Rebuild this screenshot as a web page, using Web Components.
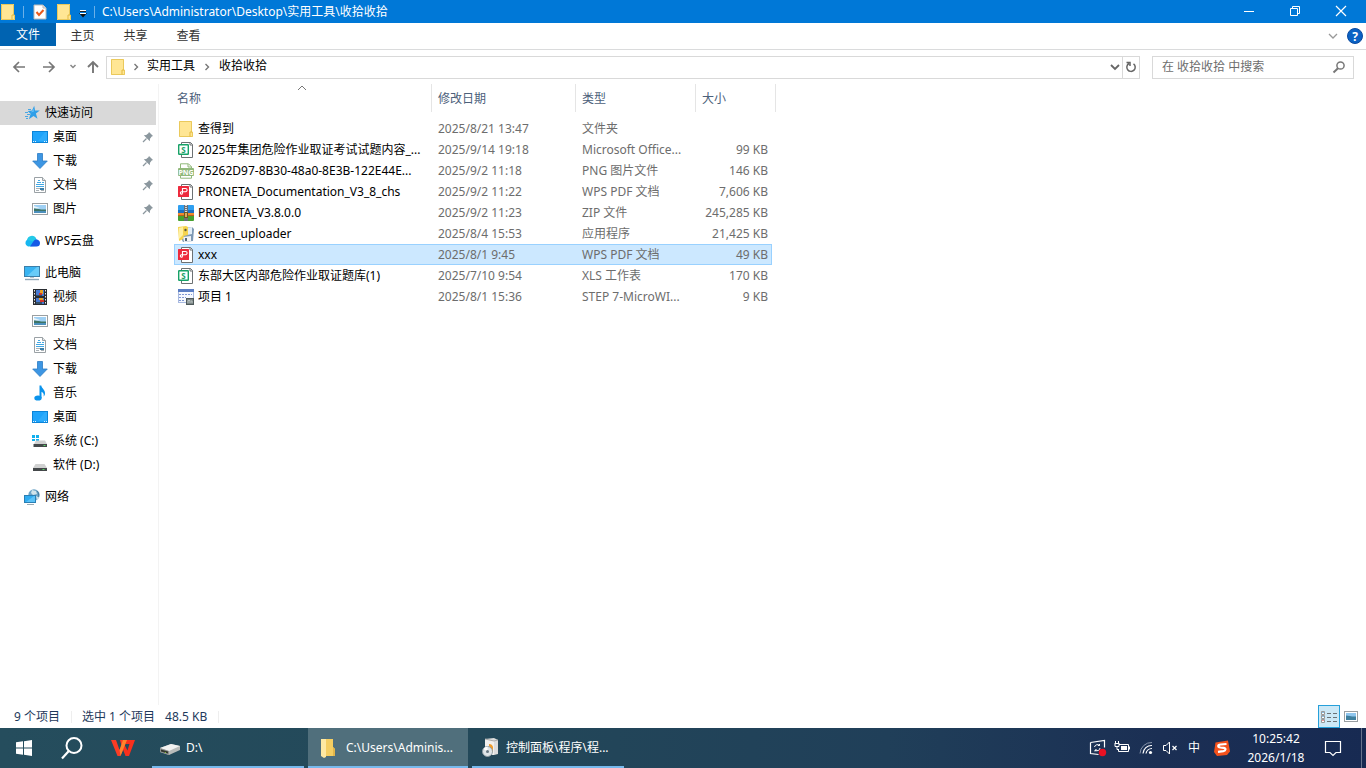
<!DOCTYPE html>
<html lang="zh-CN">
<head>
<meta charset="utf-8">
<title>收拾收拾</title>
<style>
html, body { height: 100%; margin: 0; }
body { font: 12px/16px "Noto Sans", "Noto Sans CJK SC", sans-serif; color: #000; background: #fff; overflow: hidden; }
</style>
</head>
<body>
<desktop-screen>
  <explorer-window slot="window"></explorer-window>
  <task-bar slot="taskbar">
    <task-button icon="driveBig">D:\</task-button>
    <task-button icon="folderTask" active>C:\Users\Adminis...</task-button>
    <task-button icon="programs">控制面板\程序\程...</task-button>
  </task-bar>
</desktop-screen>
<script>
const ICONS = {
  folder: [16, 16, `<path d="M1 0h13v11h1v5H1z" fill="#ffe694"/><path d="M1.500 .5h12v10.500h1V15.500h-13z" fill="none" stroke="#eac95c"/><path d="M12 15.500v-4.500h2" fill="none" stroke="#e3b93f"/>`],
  folderTask: [16, 20, `<path d="M4 1h9v8l2 2v7H4z" fill="#f5ce62"/><path d="M1 1h5v18l-2 1-3-2z" fill="#ffe9a2"/><path d="M13 9l2 2v7h-2z" fill="#e2b64a"/>`],
  props: [14, 16, `<path d="M1 1h9l3 3v11H1z" fill="#fff" stroke="#b9b9b9"/><path d="M10 1v3h3" fill="#ddd" stroke="#b9b9b9"/><path d="M3.500 8l2.500 3 4.500-5" fill="none" stroke="#ea5a1c" stroke-width="2"/>`],
  qaMenu: [8, 8, `<path d="M1 .5h6" stroke="#fff"/><path d="M1 1.500h6" stroke="#222"/><path d="M0 3h8L4 7.500z" fill="#111"/><path d="M1 3.500h6" stroke="#fff"/>`],
  min: [12, 12, `<path d="M1 6.500h10" stroke="#fff"/>`],
  restore: [12, 12, `<path d="M1.500 3.500h7v7h-7zM3.500 3V1.500h7v7H9" fill="none" stroke="#fff"/>`],
  close: [12, 12, `<path d="M1 1l10 10M11 1L1 11" stroke="#fff" stroke-width="1.200"/>`],
  chevDown: [10, 8, `<path d="M1 2l4 4 4-4" fill="none" stroke="currentColor" stroke-width="var(--w,1.300)"/>`],
  chevSmall: [8, 8, `<path d="M1.500 2L4 4.500 6.500 2" fill="none" stroke="#888" stroke-width="1.500"/>`],
  chevRight: [8, 8, `<path d="M2.500 1L5.500 4l-3 3" fill="none" stroke="#777" stroke-width="1.400"/>`],
  chevUp: [10, 6, `<path d="M1 5l4-4 4 4" fill="none" stroke="#777"/>`],
  help: [16, 16, `<circle cx="8" cy="8" r="7.500" fill="#0b62c4" stroke="#0a4aa0"/><text x="8" y="12.500" text-anchor="middle" font-family="Noto Sans" font-weight="700" font-size="12" fill="#fff">?</text>`],
  back: [14, 14, `<path d="M13 7H2M7 2L2 7l5 5" fill="none" stroke="#777" stroke-width="1.700"/>`],
  forward: [14, 14, `<path d="M1 7h11M7 2l5 5-5 5" fill="none" stroke="#777" stroke-width="1.700"/>`],
  up: [14, 14, `<path d="M7 13V2M2 7l5-5 5 5" fill="none" stroke="#777" stroke-width="1.900"/>`],
  refresh: [12, 12, `<path d="M8.500 2.800a4.200 4.200 0 1 1-4.500-.3M1.500 1.500h3.500V5" fill="none" stroke="#666" stroke-width="1.500"/>`],
  search: [14, 14, `<circle cx="8.500" cy="5.500" r="3.600" fill="none" stroke="#777" stroke-width="1.500"/><path d="M6 8.200L1.500 12.500" stroke="#777" stroke-width="2"/>`],
  quick: [16, 16, `<path d="M10.200 .8l.9 4.700 4.700.1-3.900 3 1.600 5.200-4-2.700-4.600 3.200 1.700-5.500-3-2.700 4.400-.6z" fill="#2f9fe8"/><path d="M9.500 3.500l.5 3-3 1z" fill="#62bdf5"/><path d="M4 4.500h3M1 7.500h3M3 9.500h3M1 11.500h3M2 13.500h2" stroke="#4aa6e2"/>`],
  desktop: [16, 12, `<rect width="16" height="12" fill="#0b84d8"/><rect x="1" y="1" width="14" height="10" fill="#1fa4fb"/><path d="M6 10L13 1h2v9z" fill="#2eacfc"/><path d="M1 10.500h1M3 10.500h1M12 10.500h1M14 10.500h1" stroke="#dff1ff"/>`],
  download: [16, 16, `<path d="M5.500 .5h5V8h4.800L8 15.500.700 8h4.800z" fill="#3d96e3" stroke="#2c7cc4" stroke-width=".8"/>`],
  docs: [14, 16, `<path d="M1.500 .5h8l3 3v12h-11z" fill="#fff" stroke="#9aa1a5"/><path d="M9.500 .5v3h3" fill="#e4e8ea" stroke="#9aa1a5"/><path d="M5 3.500h2M4 5.500h4M9 5.500h2M3 7.500h8M3 9.500h8" stroke="#43a8e4"/><path d="M3 11.500h4M3 13.500h3" stroke="#aab1b5"/><path d="M7 11h4v2H7z" fill="#3c7fa9"/><path d="M8 13.500h3" stroke="#aab1b5"/>`],
  pictures: [16, 12, `<rect x=".5" y=".5" width="15" height="11" fill="#fff" stroke="#9a9fa2"/><rect x="2" y="2" width="12" height="8" fill="#9fd0f4"/><path d="M2 3l6 2-6 1z" fill="#e9f5fb"/><path d="M2 5.500c4 .5 7 2 12 2V10H2z" fill="#4c90bd"/><path d="M2 5.500c4 .2 7 1.500 12 1v1.500H2z" fill="#3e7466"/>`],
  pin: [12, 12, `<path d="M7 1l4 4-1.300.6-1.700 2.200-.2 2.400L1.800 4.200l2.400-.2 2.200-1.700z" fill="#8b979e"/><path d="M4.500 7.500L1 11" stroke="#8b979e" stroke-width="1.200"/>`],
  cloud: [16, 14, `<path d="M4 12.500a3.800 3.800 0 0 1-.5-7A5 5 0 0 1 12.500 5l1 7z" fill="#16b7f1"/><path d="M3 5.800A5 5 0 0 1 12 4l-1 4z" fill="#24c9e8"/><path d="M6 12.500L10 6.500a3.500 3.500 0 0 1 6 2.500 3.500 3.500 0 0 1-3.500 3.500z" fill="#1659e6"/>`],
  pc: [16, 16, `<rect x=".5" y="1.500" width="15" height="10" fill="#39b4f2" stroke="#3c7fa9"/><path d="M3 11L13 2h2v9z" fill="#68cbf8"/><path d="M6 12h4v1H6z" fill="#b9c5cd"/><path d="M1 14.500h14" stroke="#8fa7b7" stroke-width="1.400"/>`],
  video: [14, 16, `<rect width="14" height="16" fill="#292c31"/><path d="M1.500 1v14M12.500 1v14" stroke="#e8e8e8" stroke-dasharray="1.500 1.500"/><rect x="3" y="1" width="8" height="6" fill="#4779d2"/><rect x="3" y="9" width="8" height="6" fill="#4779d2"/><path d="M7 1h3v4H7zM6 9h4v2H6z" fill="#e8a322"/><path d="M6 4h3v2H6zM7 11h4v2H7z" fill="#d2352c"/><path d="M3 6h6v1H3zM3 13h6v2H3z" fill="#34506b"/>`],
  music: [14, 16, `<ellipse cx="5" cy="13" rx="3.700" ry="2.600" fill="#0a93ec"/><path d="M6.500 .5h1.800c.2 3 4.200 4.200 3.700 8.500-.2 1.200-.8 2-1.400 2.500.6-2.500-.4-4-2.100-4.800V13h-2z" fill="#0a93ec"/>`],
  driveC: [16, 16, `<path d="M0 2h3v3H0zM4 2h3v3H4zM0 6h3v2H0zM4 6h3v2H4z" fill="#12b0ee"/><path d="M4 7.500h9l2 3.500H2z" fill="#d0d1d1"/><path d="M1.500 11h13.500v3H1.500z" fill="#44484a"/><path d="M11.500 12h2v1h-2z" fill="#58d866"/>`],
  drive: [16, 16, `<path d="M3.500 7h9l2.500 4H1z" fill="#d0d1d1"/><path d="M1 11h14v3H1z" fill="#44484a"/><path d="M10.500 12h2v1h-2z" fill="#58d866"/>`],
  network: [16, 16, `<circle cx="10" cy="6" r="5.700" fill="#6ba3c6"/><path d="M8 1l4 1 1 3-4 1-2-2zM12 7l3 1-2 3z" fill="#d1e4ea"/><path d="M13 2c2 2 2 4 1 6" stroke="#447c9c" fill="none"/><rect x=".5" y="6.500" width="11" height="7" fill="#2fabf0" stroke="#2a7fb4"/><path d="M2 13l8-6h1v6z" fill="#5cc2f7"/><path d="M3 15.500h7" stroke="#9aaab3"/>`],
  et: [16, 16, `<path d="M3.500 .5h9l2 2v13h-11z" fill="#fff" stroke="#6c7173"/><path d="M12 .5v2.500h2.500" fill="none" stroke="#6c7173"/><rect y="2" width="11" height="11" fill="#fff"/><rect x=".7" y="2.700" width="9.600" height="9.600" rx=".5" fill="#fff" stroke="#17a267" stroke-width="1.400"/><text x="5.500" y="10.500" text-anchor="middle" font-family="Noto Sans" font-weight="700" font-size="8" fill="#17a267">S</text>`],
  pdf: [16, 16, `<path d="M3.500 .5h9l2 2v13h-11z" fill="#fff" stroke="#6c7173"/><path d="M12 .5v2.500h2.500" fill="none" stroke="#6c7173"/><rect y="2" width="11" height="11" rx=".5" fill="#ed2a3d"/><path d="M4.500 9.500v-5h3a1.500 1.500 0 0 1 0 3.200H3.500a1.200 1.200 0 1 0 1 2" fill="none" stroke="#fff" stroke-width="1.100"/>`],
  png: [16, 16, `<path d="M2.500 6V.800h8l3 3V6M2.500 12v3.200h11V12" fill="none" stroke="#91b97b"/><path d="M10 1v3h3.500" fill="none" stroke="#91b97b"/><rect y="5" width="16" height="8" rx="1" fill="#91b97b"/><text x="8" y="11.500" text-anchor="middle" font-family="Noto Sans" font-weight="700" font-size="7" fill="#fff">PNG</text>`],
  zip: [16, 16, `<rect width="16" height="7" rx="1" fill="#2f9ff0"/><rect y="5" width="16" height="3" fill="#1b6fc0"/><rect y="8" width="16" height="3" fill="#f08a2c"/><rect y="10" width="16" height="6" rx="1" fill="#46a12f"/><rect y="10" width="16" height="1" fill="#b6601c"/><rect x="6" width="4" height="16" fill="#6a7076"/><path d="M8 0v8" stroke="#d8dadc" stroke-dasharray="1 1" stroke-width="2"/><rect x="6.500" y="7.500" width="3" height="5" fill="#d8b062" stroke="#70541d"/>`],
  exe: [16, 16, `<path d="M5 2l9-1 2 2-1 12-10 1-2-4z" fill="#7e99b4"/><path d="M8 2l6-1v7l-5 1z" fill="#e3eef6"/><path d="M5 11l8-1v5l-7 1z" fill="#f1f3f4"/><path d="M0 1l8-1 2 1v8l-4 1-1 3-4 2z" fill="#f5d44e"/><path d="M1 2l4-1v8l-4 4z" fill="#fff0a0"/><circle cx="7.500" cy="4" r="1.200" fill="#5d5a3a"/><path d="M7 12h2v3H7z" fill="#54687a"/>`],
  step: [16, 16, `<rect x=".5" y=".5" width="15" height="13" fill="#f6f9ff" stroke="#a9bae0"/><rect width="16" height="3" fill="#5b7ec4"/><path d="M1 5.500h13M1 8.500h7M1 11.500h5" stroke="#8098d4" stroke-dasharray="2 1"/><rect x="8.500" y="9.500" width="7" height="6" fill="#7c8686" stroke="#4f5a5b"/><path d="M10 14v-2.500h2V14M13 12h1v2" stroke="#b9c2c1" fill="none"/>`],
  viewDetails: [16, 14, `<path d="M.500 1.500h3v3h-3zM.500 5.500h3v3h-3zM.500 9.500h3v3h-3z" fill="#fff" stroke="#999"/><path d="M2 2v1M2 6v1" stroke="#187cc4"/><path d="M2 10v1" stroke="#d33"/><path d="M6 3.500h4M12 3.500h4M6 7.500h4M12 7.500h4M6 11.500h4M12 11.500h4" stroke="#6b7276"/>`],
  viewBig: [14, 11, `<rect x=".5" y=".5" width="13" height="10" fill="#fff" stroke="#9a9fa2"/><rect x="2" y="2" width="10" height="7" fill="#8fc6ee"/><path d="M2 4.500c3 0 6 1.500 10 1V9H2z" fill="#3e7f9e"/>`],
  windows: [16, 16, `<path d="M0 2.300L7 1.300V7.500H0zM8 1.200L16 0v7.500H8zM0 8.500h7v6.200l-7-1zM8 8.500h8V16l-8-1.200z" fill="#fff"/>`],
  searchBig: [24, 24, `<circle cx="14" cy="9.500" r="7.500" fill="none" stroke="#fff" stroke-width="2"/><path d="M8.800 15L2 22.500" stroke="#fff" stroke-width="2.200"/>`],
  wps: [24, 18, `<path d="M0 1h5l3.500 10 2-4.500L9 1h7l-6.500 16h-3z" fill="#fb3c25"/><path d="M12 1h12l-6 16h-3.500L11 8l1.500-4 4 7.500L18.500 5h-4z" fill="#f9301d"/><path d="M12 1h4l-6.500 16-1-6z" fill="#ff842b"/>`],
  driveBig: [22, 14, `<path d="M1 7l11-4 9 2v4l-11 5-9-3z" fill="#b9bcba"/><path d="M1 7l11-4 9 2-11 5z" fill="#f2f2f1"/><path d="M1 7l9 3v4l-9-3z" fill="#8f9290"/><path d="M2 8.500l7 2v2l-7-2z" fill="#34382f"/><path d="M6 11h1v1H6z" fill="#7fbc35"/>`],
  programs: [18, 20, `<path d="M4 1l9-1 4 2v14l-4 1-9-1z" fill="#ddd"/><path d="M4 1l9 2v14l-9-2z" fill="#f1f0ee"/><path d="M4 1l9 2 4-1" fill="none" stroke="#aaa"/><path d="M8 6a4 4 0 0 1 4 3v5H8z" fill="#ee9c2d"/><circle cx="6.500" cy="13.500" r="5" fill="#dfe5e8" stroke="#909ea5"/><path d="M6.500 13.500l-4-2.500a5 5 0 0 1 4-2.500z" fill="#fff"/><circle cx="6.500" cy="13.500" r="1.500" fill="#687882"/>`],
  sync: [18, 18, `<path d="M1.500 3.500l14-2v7M1.500 3.500v11l8 1" fill="none" stroke="#fff" stroke-width="1.200"/><path d="M5.500 8a3 3 0 0 1 5-1.500V5M10.500 6.500H9M11 9a3 3 0 0 1-5 2V12.500M6 11h2" fill="none" stroke="#fff"/><circle cx="13.500" cy="13.500" r="3.700" fill="#e81123"/>`],
  battery: [16, 14, `<path d="M5 3.500h9.500v7H4.500V8M15.500 5.500v3" fill="none" stroke="#fff"/><path d="M7 5h6v4H7z" fill="#fff"/><path d="M1.500 0v2M4.500 0v2M.5 2.500h5M1 3v2.500h4V3M3 5.500v3h1.500" fill="none" stroke="#fff"/>`],
  wifi: [14, 14, `<path d="M1 12.500A11.500 11.500 0 0 1 13 1.500" fill="none" stroke="#8a97ac"/><path d="M4 12.500A8.500 8.500 0 0 1 13 4.500M7 12.500a6 6 0 0 1 6-5" fill="none" stroke="#fff" stroke-width="1.200"/><circle cx="11.500" cy="11.500" r="1.600" fill="#fff"/>`],
  mute: [16, 14, `<path d="M1.500 4.500H4L7.500 1v12L4 9.500H1.500z" fill="none" stroke="#fff"/><path d="M10.500 5l4 4M14.500 5l-4 4" stroke="#fff" stroke-width="1.200"/>`],
  sogou: [16, 16, `<path d="M1.500 2.500L14 .5l2 11-3 3.500-10 1-3-4z" fill="#f4511b"/><path d="M12.500 4L6.500 4.500c-3 .3-3 2.500 0 3l3 .3c2.800.4 2.500 3-.2 3.400l-5.300.6" fill="none" stroke="#fff" stroke-width="2.200"/>`],
  notify: [18, 18, `<path d="M1.500 2.500h15v11H12L9 16.500l-3-3H1.500z" fill="none" stroke="#fff" stroke-width="1.200"/>`]
};

class Base extends HTMLElement {
  connectedCallback() {
    if (this.shadowRoot) return;
    this.attachShadow({ mode: "open" }).innerHTML =
      `<style>*{box-sizing:border-box}button{font:inherit;color:inherit;border:0;padding:0;margin:0;background:none;display:flex;align-items:center;justify-content:center}a{color:inherit;text-decoration:none}</style>` + this.render();
  }
}
const define = (name, render) => customElements.define(name, class extends Base { render() { return render(this); } });

define("ui-icon", el => {
  const [w, h, body] = ICONS[el.getAttribute("name")];
  return `<style>:host{display:inline-flex;flex:none}svg{display:block}</style>
  <svg width="${w}" height="${h}" viewBox="0 0 ${w} ${h}" aria-hidden="true">${body}</svg>`;
});

define("desktop-screen", () => `<style>
  :host{display:grid;grid-template-rows:minmax(0,1fr) 40px;height:100vh}
  </style><slot name="window"></slot><slot name="taskbar"></slot>`);

define("explorer-window", () => `<style>
  :host{display:grid;grid-template-rows:auto auto auto minmax(0,1fr) auto;background:#fff}
  main{display:grid;grid-template-columns:159px minmax(0,1fr)}
  </style>
  <title-bar>C:\\Users\\Administrator\\Desktop\\实用工具\\收拾收拾</title-bar>
  <ribbon-tabs></ribbon-tabs>
  <address-row></address-row>
  <main>
    <nav-pane>
      <nav-item icon="quick" top current>快速访问</nav-item>
      <nav-item icon="desktop" pinned>桌面</nav-item>
      <nav-item icon="download" pinned>下载</nav-item>
      <nav-item icon="docs" pinned>文档</nav-item>
      <nav-item icon="pictures" pinned>图片</nav-item>
      <nav-item icon="cloud" top>WPS云盘</nav-item>
      <nav-item icon="pc" top>此电脑</nav-item>
      <nav-item icon="video">视频</nav-item>
      <nav-item icon="pictures">图片</nav-item>
      <nav-item icon="docs">文档</nav-item>
      <nav-item icon="download">下载</nav-item>
      <nav-item icon="music">音乐</nav-item>
      <nav-item icon="desktop">桌面</nav-item>
      <nav-item icon="driveC">系统 (C:)</nav-item>
      <nav-item icon="drive">软件 (D:)</nav-item>
      <nav-item icon="network" top>网络</nav-item>
    </nav-pane>
    <file-list></file-list>
  </main>
  <status-bar></status-bar>`);

define("title-bar", () => `<style>
  :host{display:flex;align-items:center;height:23px;background:#0078d7;color:#fff;padding-right:2px}
  .quick{display:flex;align-items:center;gap:7px;padding-right:7px}
  i{width:1px;height:12px;background:#6bb0e8}
  h1{flex:1;font:inherit;margin:0;white-space:nowrap;overflow:hidden}
  .doc{padding:0 2px}
  .ctl{width:46px;height:23px}
  .ctl ui-icon{margin-bottom:2px}
  .menu{padding-top:4px}
  </style>
  <div class="quick"><ui-icon name="folder"></ui-icon><i></i>
  <button class="doc" aria-label="属性"><ui-icon name="props"></ui-icon></button>
  <button aria-label="新建文件夹"><ui-icon name="folder"></ui-icon></button>
  <button class="menu" aria-label="自定义"><ui-icon name="qaMenu"></ui-icon></button><i></i></div>
  <h1><slot></slot></h1>
  <button class="ctl" aria-label="最小化"><ui-icon name="min"></ui-icon></button>
  <button class="ctl" aria-label="还原"><ui-icon name="restore"></ui-icon></button>
  <button class="ctl" aria-label="关闭"><ui-icon name="close"></ui-icon></button>`);

define("ribbon-tabs", () => `<style>
  :host{display:flex;height:27px;border-bottom:1px solid #dadbdc;color:#333;padding-right:3px}
  button{width:53px;height:26px}
  .file{width:56px;height:23px;background:#0063b1;color:#fff}
  .end{margin-left:auto;width:28px;color:#999}
  .help{width:16px}
  </style>
  <button class="file">文件</button><button>主页</button><button>共享</button><button>查看</button>
  <button class="end" aria-label="展开功能区"><ui-icon name="chevDown"></ui-icon></button>
  <button class="help" aria-label="帮助"><ui-icon name="help"></ui-icon></button>`);

define("address-row", () => `<style>
  :host{display:flex;align-items:center;height:34px;padding:0 12px}
  .nav{display:flex;align-items:center;width:94px}
  .nav button{height:24px;width:14px}
  .nav button:nth-child(2){margin-left:16px}
  .nav button:nth-child(3){margin-left:13px;width:8px}
  .nav button:nth-child(4){margin-left:9px}
  .path,.search{display:flex;align-items:center;height:23px;border:1px solid #d9d9d9}
  .path{flex:1;padding-left:3px}
  .path>ui-icon[name=chevRight]{margin:0 7px 0 6px}
  .path a+ui-icon[name=chevRight]{margin:0 8px}
  .path a{line-height:18px;padding-bottom:3px}
  .drop{margin-left:auto;width:14px;height:21px;color:#666;--w:1.800}
  .reload{width:17px;height:21px;border-left:1px solid #d9d9d9}
  .search{width:202px;margin-left:12px;padding:0 7px 0 9px}
  input{flex:1;min-width:0;border:0;outline:0;padding:0;background:none;font:inherit}
  input::placeholder{color:#6d6d6d;opacity:1}
  </style>
  <div class="nav"><button aria-label="后退"><ui-icon name="back"></ui-icon></button>
  <button aria-label="前进"><ui-icon name="forward"></ui-icon></button>
  <button aria-label="最近位置"><ui-icon name="chevSmall"></ui-icon></button>
  <button aria-label="上移"><ui-icon name="up"></ui-icon></button></div>
  <div class="path"><ui-icon name="folder"></ui-icon><ui-icon name="chevRight"></ui-icon><a href="#">实用工具</a><ui-icon name="chevRight"></ui-icon><a href="#">收拾收拾</a>
  <button class="drop" aria-label="历史"><ui-icon name="chevDown"></ui-icon></button>
  <button class="reload" aria-label="刷新"><ui-icon name="refresh"></ui-icon></button></div>
  <div class="search"><input type="text" aria-label="搜索" placeholder="在 收拾收拾 中搜索"><ui-icon name="search"></ui-icon></div>`);

define("nav-pane", () => `<style>
  :host{display:block;padding-top:17px;border-right:1px solid #f3f3f3}
  nav{display:flex;flex-direction:column}
  </style><nav aria-label="导航窗格"><slot></slot></nav>`);

define("nav-item", el => `<style>
  :host{display:block;margin-right:2px}
  :host([top]:not([current])){margin-top:8px}
  a{display:flex;align-items:center;height:24px;padding:0 2px 0 32px}
  :host([top]) a{padding-left:24px}
  :host([current]) a{background:#d9d9d9}
  .ic{width:16px;display:flex;justify-content:center;margin-right:5px}
  .pin{margin-left:auto}
  </style><a href="#"><span class="ic"><ui-icon name="${el.getAttribute("icon")}"></ui-icon></span><slot></slot>${el.hasAttribute("pinned") ? '<ui-icon class="pin" name="pin"></ui-icon>' : ""}</a>`);

const FILES = [
  ["folder", "查得到", "2025/8/21 13:47", "文件夹", ""],
  ["et", "2025年集团危险作业取证考试试题内容_...", "2025/9/14 19:18", "Microsoft Office...", "99 KB"],
  ["png", "75262D97-8B30-48a0-8E3B-122E44E...", "2025/9/2 11:18", "PNG 图片文件", "146 KB"],
  ["pdf", "PRONETA_Documentation_V3_8_chs", "2025/9/2 11:22", "WPS PDF 文档", "7,606 KB"],
  ["zip", "PRONETA_V3.8.0.0", "2025/9/2 11:23", "ZIP 文件", "245,285 KB"],
  ["exe", "screen_uploader", "2025/8/4 15:53", "应用程序", "21,425 KB"],
  ["pdf", "xxx", "2025/8/1 9:45", "WPS PDF 文档", "49 KB"],
  ["et", "东部大区内部危险作业取证题库(1)", "2025/7/10 9:54", "XLS 工作表", "170 KB"],
  ["step", "项目 1", "2025/8/1 15:36", "STEP 7-MicroWI...", "9 KB"]
];

define("file-list", () => `<style>
  :host{display:block;padding-left:15px}
  table{table-layout:fixed;width:602px;border-spacing:0;border-collapse:separate}
  col.n{width:258px}col.d{width:144px}col.t{width:120px}col.s{width:76px}
  th,td{padding:0;text-align:left;font-weight:400;white-space:nowrap}
  th{height:34px;vertical-align:top;color:#4c607a}
  th div{height:28px;display:flex;align-items:center;padding:2px 0 0 6px;border-right:1px solid #e5e5e5;position:relative}
  th:first-child div{padding-left:3px}
  th ui-icon{position:absolute;left:50%;margin-left:-6px;top:1px}
  td{height:21px;padding-left:6px;color:#6d6d6d}
  td:first-child{padding-left:4px;color:#000}
  td:nth-child(4){text-align:right;padding:0 4px 0 0}
  .name{display:flex;align-items:center;gap:4px}
  .sel td:not(:last-child){background:#cce8ff;box-shadow:inset 0 1px #99d1ff,inset 0 -1px #99d1ff}
  .sel td:first-child{box-shadow:inset 1px 0 #99d1ff,inset 0 1px #99d1ff,inset 0 -1px #99d1ff}
  .sel td:nth-child(4){box-shadow:inset -1px 0 #99d1ff,inset 0 1px #99d1ff,inset 0 -1px #99d1ff}
  </style><table><colgroup><col class="n"><col class="d"><col class="t"><col class="s"><col></colgroup>
  <thead><tr><th><div>名称<ui-icon name="chevUp"></ui-icon></div></th><th><div>修改日期</div></th><th><div>类型</div></th><th colspan="2"><div>大小</div></th></tr></thead>
  <tbody>${FILES.map(([i, n, d, t, s]) => `<tr${n === "xxx" ? ' class="sel"' : ""}><td><div class="name"><ui-icon name="${i}"></ui-icon><span>${n}</span></div></td><td>${d}</td><td>${t}</td><td>${s}</td><td></td></tr>`).join("")}</tbody></table>`);

define("status-bar", () => `<style>
  :host{display:flex;align-items:center;height:23px;padding-left:14px;color:#1e395b}
  span{white-space:pre}
  .sep{width:1px;height:12px;background:#eee;margin:0 10px 0 11px}
  .sel{margin-right:10px}
  button{width:22px;height:23px}
  .on{margin-left:auto;background:#cce8f6;border:1px solid #26a0da}
  .big{margin-right:4px}
  </style><span>9 个项目</span><i class="sep"></i><span class="sel">选中 1 个项目</span><span>48.5 KB</span><i class="sep"></i>
  <button class="on" aria-label="详细信息"><ui-icon name="viewDetails"></ui-icon></button>
  <button class="big" aria-label="大缩略图"><ui-icon name="viewBig"></ui-icon></button>`);

define("task-bar", () => `<style>
  :host{display:flex;background:linear-gradient(90deg,#254d5d 0,#234859 35%,#203f59 65%,#1b2f54 85%,#172a52 100%);color:#fff}
  .apps,.tasks,.tray{display:flex}
  .start{width:48px}.find{width:48px}.wps{width:54px}
  .tasks{gap:4px;padding-left:2px}
  .tray{margin-left:auto}
  .tray button{width:24px}
  .tray .sogou{width:32px}
  .tray .clock{width:76px;flex-direction:column;line-height:19px}
  .tray .note{width:38px}
  .tray .desk{width:5px;margin-left:9px;border-left:1px solid #66748d}
  </style>
  <div class="apps"><button class="start" aria-label="开始"><ui-icon name="windows"></ui-icon></button>
  <button class="find" aria-label="搜索"><ui-icon name="searchBig"></ui-icon></button>
  <button class="wps" aria-label="WPS"><ui-icon name="wps"></ui-icon></button></div>
  <div class="tasks"><slot></slot></div>
  <div class="tray"><button aria-label="更新"><ui-icon name="sync"></ui-icon></button>
  <button aria-label="电池"><ui-icon name="battery"></ui-icon></button>
  <button aria-label="网络"><ui-icon name="wifi"></ui-icon></button>
  <button aria-label="音量"><ui-icon name="mute"></ui-icon></button>
  <button>中</button>
  <button class="sogou" aria-label="输入法"><ui-icon name="sogou"></ui-icon></button>
  <button class="clock"><span>10:25:42</span><span>2026/1/18</span></button>
  <button class="note" aria-label="通知"><ui-icon name="notify"></ui-icon></button>
  <button class="desk" aria-label="显示桌面"></button></div>`);

define("task-button", el => `<style>
  :host{display:flex}
  button{width:152px;justify-content:flex-start;border-bottom:2px solid #76b9ed;padding:2px 0 0 7px;white-space:nowrap}
  :host([active]) button{width:160px;background:#506f7c;padding-left:9px}
  .ic{width:22px;display:flex;justify-content:center;margin-right:5px}
  :host([active]) .ic{margin-right:7px}
  </style><button><span class="ic"><ui-icon name="${el.getAttribute("icon")}"></ui-icon></span><slot></slot></button>`);
</script>
</body>
</html>
